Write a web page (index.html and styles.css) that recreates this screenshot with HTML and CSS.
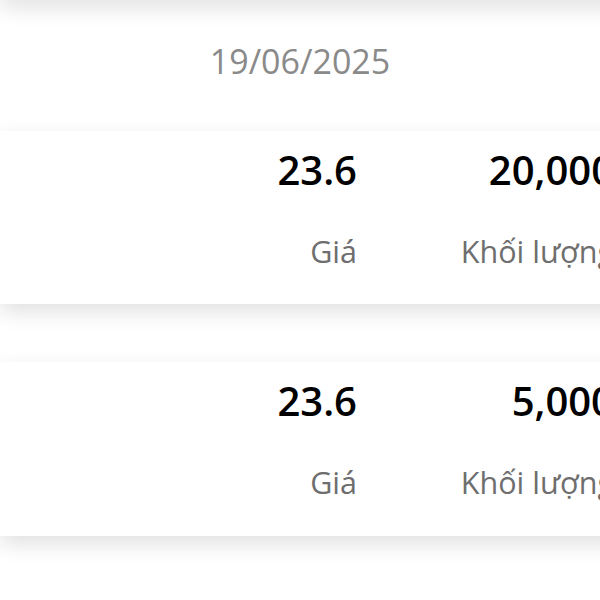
FILE: index.html
```html
<!DOCTYPE html>
<html lang="vi">
<head>
<meta charset="utf-8">
<title>Lệnh khớp</title>
<link rel="stylesheet" href="styles.css">
</head>
<body>
<div class="page">
  <div class="top-card"></div>
  <div class="date">19/06/2025</div>
  <div class="card">
    <div class="cell"></div>
    <div class="cell">
      <div class="value">23.6</div>
      <div class="label">Giá</div>
    </div>
    <div class="cell">
      <div class="value">20,000</div>
      <div class="label">Khối lượng</div>
    </div>
  </div>
  <div class="card">
    <div class="cell"></div>
    <div class="cell">
      <div class="value">23.6</div>
      <div class="label">Giá</div>
    </div>
    <div class="cell">
      <div class="value">5,000</div>
      <div class="label">Khối lượng</div>
    </div>
  </div>
</div>
</body>
</html>
```

FILE: styles.css
```css
html, body {
  margin: 0;
  padding: 0;
  background: #ffffff;
}
body {
  width: 600px;
  height: 600px;
  overflow: hidden;
  font-family: "Open Sans", "Noto Sans", sans-serif;
}
.page {
  width: 700px;
  display: flex;
  flex-direction: column;
}
.top-card {
  height: 20px;
  margin-top: -20px;
  background: #ffffff;
  box-shadow: 0 8px 20px rgba(0, 0, 0, 0.12);
}
.date {
  margin-top: 38px;
  width: 600px;
  text-align: center;
  font-size: 34px;
  line-height: 46px;
  color: #8a8a8a;
}
.card {
  margin-top: 47px;
  height: 173px;
  box-sizing: border-box;
  padding-top: 12px;
  background: #ffffff;
  box-shadow: 0 8px 20px rgba(0, 0, 0, 0.12);
  display: grid;
  grid-template-columns: 100px 257px 257px;
}
.card + .card {
  margin-top: 58px;
  height: 174px;
}
.cell {
  text-align: right;
  white-space: nowrap;
}
.value {
  font-size: 40px;
  line-height: 54px;
  font-weight: 600;
  color: #000000;
}
.label {
  margin-top: 34px;
  font-size: 30.5px;
  line-height: 40px;
  color: #6e6e6e;
}
```
